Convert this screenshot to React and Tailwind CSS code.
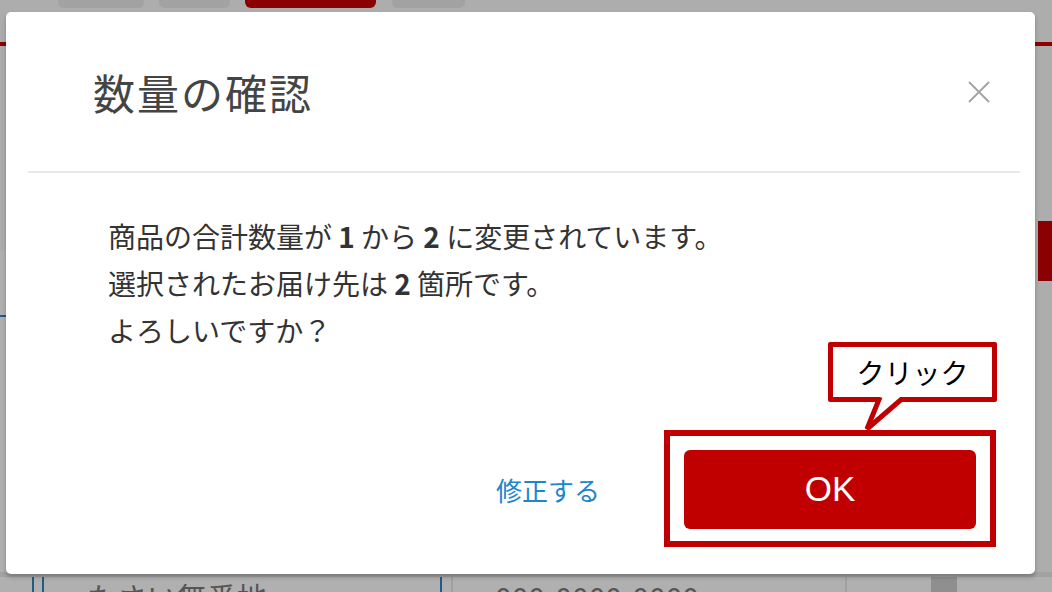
import React from 'react';

const jp = { fontFamily: '"Noto Sans CJK JP", "Noto Sans", sans-serif' };

function BackgroundPage() {
    return (
        <div className="flex flex-col h-full">
            {/* tabs */}
            <div className="flex h-[8px]">
                <div className="ml-[58px] w-[86px] bg-[#a2a2a2] rounded-b-[6px]"></div>
                <div className="ml-[15px] w-[71px] bg-[#a2a2a2] rounded-b-[6px]"></div>
                <div className="ml-[15px] w-[131px] bg-[#8b0000] rounded-b-[6px]"></div>
                <div className="ml-[16px] w-[73px] bg-[#a2a2a2] rounded-b-[6px]"></div>
            </div>
            <div className="mt-[34px] h-[4px] bg-[#8b0000]"></div>

            {/* middle */}
            <div className="flex justify-between h-[526px]">
                <div className="w-[12px] pt-[205px]">
                    <div className="h-full w-[11px] bg-[#b0b0b0] border-r border-[#a6a6a6] pt-[64px]">
                        <div className="h-[2px] w-[10px] bg-[#1d5e86]"></div>
                    </div>
                </div>
                <div className="w-[14px] pt-[175px]">
                    <div className="h-[60px] bg-[#8b0000]"></div>
                </div>
            </div>

            {/* bottom row */}
            <div className="flex-1 bg-[#b0b0b0] border-t-[5px] border-[#a2a2a2] flex text-[#555] overflow-hidden" style={jp}>
                <div className="ml-[32px] w-[2px] bg-[#1d5e86]"></div>
                <div className="ml-[8px] w-[2px] bg-[#1d5e86]"></div>
                <div className="ml-[43px] text-[30px] leading-[30px] mt-[4px] w-[353px] shrink-0">たさい無番地</div>
                <div className="w-[2px] bg-[#1d5e86]"></div>
                <div className="ml-[9px] w-[2px] bg-[#a0a0a0]"></div>
                <div className="ml-[42px] text-[30px] leading-[30px] mt-[5px] w-[350px] shrink-0">000-0000-0000</div>
                <div className="w-[2px] bg-[#a0a0a0]"></div>
                <div className="ml-[84px] w-[26px] bg-[#8f8f8f]"></div>
            </div>
        </div>
    );
}

function ConfirmModal() {
    return (
        <div className="absolute left-[6px] top-[12px] w-[1029px] h-[562px] bg-white rounded-[5px] shadow-[0_3px_4px_rgba(0,0,0,0.25)] flex flex-col" style={jp}>
            {/* header */}
            <div className="h-[159px] flex items-center justify-between pl-[87px] pr-[45px]">
                <h1 className="text-[42px] font-normal text-[#444] tracking-[2px]">数量の確認</h1>
                <button className="w-[22px] h-[22px]">
                    <svg viewBox="0 0 22 22" width="22" height="22">
                        <path d="M1 1 L21 21 M21 1 L1 21" stroke="#a5a5a5" strokeWidth="2" fill="none" />
                    </svg>
                </button>
            </div>
            <div className="ml-[22px] mr-[15px] h-[2px] bg-[#e8e8e8]"></div>

            {/* body */}
            <div className="pt-[40px] pl-[102px] text-[28px] leading-[47px] text-[#333]">
                <p>商品の合計数量が <b>1</b> から <b>2</b> に変更されています。</p>
                <p>選択されたお届け先は <b>2</b> 箇所です。</p>
                <p>よろしいですか？</p>
            </div>

            {/* footer */}
            <div className="mt-auto mb-[27px] mr-[39px] flex items-center justify-end">
                <button className="text-[26px] text-[#1b87cc] mr-[64px] mt-[2px]">修正する</button>
                <div className="relative border-[6px] border-[#c00000] pt-[14px] pb-[12px] px-[14px]">
                    <button
                        className="w-[292px] h-[79px] bg-[#c00000] rounded-[6px] text-white text-[35px]"
                        style={{ fontFamily: '"Liberation Sans", Arial, sans-serif' }}
                    >
                        OK
                    </button>

                    {/* callout */}
                    <div className="absolute left-[158px] top-[-94px] w-[169px] h-[60px] border-[5px] border-[#c00000] rounded-[2px] bg-white flex items-center justify-center text-[28px] text-black">
                        クリック
                    </div>
                    <svg className="absolute left-[190px] top-[-39px]" width="50" height="36" viewBox="0 0 50 36">
                        <polygon points="20,0 44,0 7,32" fill="white" />
                        <polyline points="20,0 7,32 44,0" fill="none" stroke="#c00000" strokeWidth="5" strokeLinejoin="miter" />
                    </svg>
                </div>
            </div>
        </div>
    );
}

export default function App() {
    return (
        <div className="relative w-[1052px] h-[592px] overflow-hidden bg-[#adadad]">
            <BackgroundPage />
            <ConfirmModal />
        </div>
    );
}
